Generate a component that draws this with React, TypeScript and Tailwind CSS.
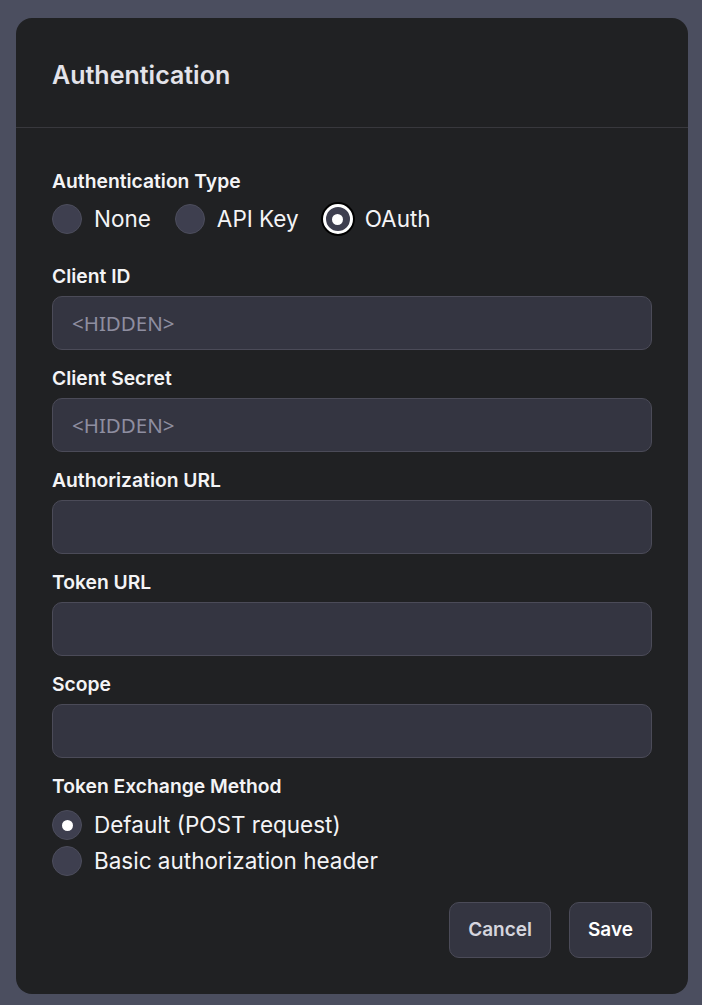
const fields = [
  { label: "Client ID", placeholder: "<HIDDEN>" },
  { label: "Client Secret", placeholder: "<HIDDEN>" },
  { label: "Authorization URL", placeholder: "" },
  { label: "Token URL", placeholder: "" },
  { label: "Scope", placeholder: "" },
];

const Radio = ({
  label,
  checked,
  focused,
}: {
  label: string;
  checked?: boolean;
  focused?: boolean;
}) => (
  <label className="flex items-center gap-3 cursor-pointer">
    <span
      className={
        focused
          ? "w-[30px] h-[30px] rounded-full bg-[#3e3f4f] border-[3px] border-white ring-2 ring-black flex items-center justify-center"
          : "w-[30px] h-[30px] rounded-full bg-[#3e3f4f] border border-[#4c4d5c] flex items-center justify-center"
      }
    >
      {checked && <span className="w-[11px] h-[11px] rounded-full bg-white" />}
    </span>
    <span className="text-[22.5px] leading-[28px] text-[#f4f4f6]">{label}</span>
  </label>
);

export default function App() {
  return (
    <div
      className="min-h-screen bg-[#4b4e5f] pl-4 pt-[18px] pb-[11px]"
      style={{ fontFamily: "Inter, 'Liberation Sans', sans-serif" }}
    >
      <div className="w-[672px] h-[976px] bg-[#202123] rounded-2xl flex flex-col">
        <div className="px-9 pt-[41px] pb-[36px] border-b border-[#38383d]">
          <h1 className="text-[25px] leading-8 font-semibold text-[#e3e3ea]">
            Authentication
          </h1>
        </div>

        <div className="px-9 pt-[41px] pb-9 flex flex-col">
          <div className="text-[19.3px] leading-6 font-semibold text-[#f4f4f6] mb-[10px]">
            Authentication Type
          </div>
          <div className="flex items-center gap-6 h-8">
            <Radio label="None" />
            <Radio label="API Key" />
            <Radio label="OAuth" checked focused />
          </div>

          <div className="flex flex-col gap-4 mt-[29px]">
            {fields.map((f) => (
              <div key={f.label} className="flex flex-col gap-2">
                <div className="text-[19.3px] leading-6 font-semibold text-[#f4f4f6]">
                  {f.label}
                </div>
                <input
                  placeholder={f.placeholder}
                  className="h-[54px] w-full rounded-[10px] bg-[#343541] border border-[#4b4b58] px-[19px] text-[20.5px] text-white placeholder:text-[#8e8ea0] outline-none"
                  style={{ fontFamily: "'Noto Sans', 'Open Sans', sans-serif" }}
                />
              </div>
            ))}
          </div>

          <div className="text-[19.3px] leading-6 font-semibold text-[#f4f4f6] mt-4 mb-3">
            Token Exchange Method
          </div>
          <div className="flex flex-col gap-[6px]">
            <Radio label="Default (POST request)" checked />
            <Radio label="Basic authorization header" />
          </div>

          <div className="flex justify-end gap-[18px] mt-[26px]">
            <button className="h-14 px-[18px] rounded-[10px] bg-[#343541] border border-[#4b4b58] text-[19px] font-semibold text-[#d5d5de]">
              Cancel
            </button>
            <button className="h-14 px-[18px] rounded-[10px] bg-[#343541] border border-[#4b4b58] text-[19px] font-semibold text-white">
              Save
            </button>
          </div>
        </div>
      </div>
    </div>
  );
}
